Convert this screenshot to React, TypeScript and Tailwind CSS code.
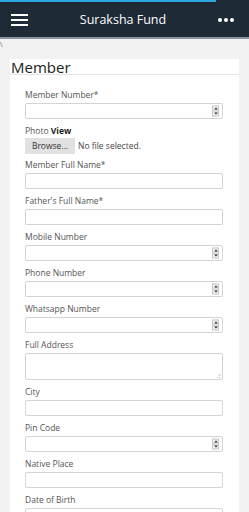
import React from 'react';

const Spinner = () => (
  <div className="absolute right-[3px] top-1/2 -translate-y-1/2 flex flex-col w-[7px] h-[11px] border border-[#c8c8c8] bg-[#f0f0f0]">
    <div className="flex-1 flex items-center justify-center border-b border-[#c8c8c8]">
      <div className="w-0 h-0 border-l-[2px] border-r-[2px] border-b-[2px] border-l-transparent border-r-transparent border-b-[#333]" />
    </div>
    <div className="flex-1 flex items-center justify-center">
      <div className="w-0 h-0 border-l-[2px] border-r-[2px] border-t-[2px] border-l-transparent border-r-transparent border-t-[#333]" />
    </div>
  </div>
);

const Field = ({ label, spin, tall, placeholder }: { label: React.ReactNode; spin?: boolean; tall?: boolean; placeholder?: string }) => (
  <div className="mb-[6px]">
    <div className="h-[12px] leading-[12px] text-[8.5px] text-[#555] mb-[2px]">{label}</div>
    <div className={`relative border border-[#d4d4d4] rounded-[2px] bg-white ${tall ? 'h-[27px]' : 'h-[16px]'}`}>
      {placeholder && <span className="absolute left-[5px] top-[2px] text-[8.5px] text-[#888]">{placeholder}</span>}
      {spin && <Spinner />}
      {tall && (
        <svg className="absolute right-[1px] bottom-[1px]" width="5" height="5" viewBox="0 0 5 5">
          <path d="M4 1 L4 1.5 M3 2.5 L3 3 M4 2.5 L4 3 M2 4 L2 4.5 M3 4 L3 4.5 M4 4 L4 4.5" stroke="#999" strokeWidth="1" />
        </svg>
      )}
    </div>
  </div>
);

export default function App() {
  return (
    <div className="w-[249px] h-[512px] overflow-hidden bg-[#f2f2f2] font-['Open_Sans',sans-serif]">
      {/* Header */}
      <div className="bg-[#1e2a36] border-b-2 border-[#8c949b]">
        <div className="h-[2px] w-[216px] bg-[#2ba6df]" />
        <div className="h-[35px] flex items-center pl-[11px] pr-[15px]">
          <div className="flex flex-col gap-[3px] w-[17px]">
            <div className="h-[2px] bg-white" />
            <div className="h-[2px] bg-white" />
            <div className="h-[2px] bg-white" />
          </div>
          <div className="flex-1 text-center text-white text-[12.5px] leading-none pt-[1px]">Suraksha Fund</div>
          <div className="flex gap-[2px] w-[16px] pt-[1px]">
            <div className="w-[4px] h-[4px] rounded-full bg-white" />
            <div className="w-[4px] h-[4px] rounded-full bg-white" />
            <div className="w-[4px] h-[4px] rounded-full bg-white" />
          </div>
        </div>
      </div>

      <div className="h-[20px] text-[7px] leading-[12px] text-[#666]">\</div>

      {/* Card */}
      <div className="mx-[10px] bg-white">
        <div className="h-[16px] leading-[16px] text-[15px] text-[#222] pl-[1px] border-b border-[#e6e6e6]">Member</div>
        <div className="pl-[15px] pr-[16px] pt-[14px]">
          <Field label="Member Number*" spin />
          <div className="mb-[5px]">
            <div className="h-[12px] leading-[12px] text-[8.5px] text-[#555] mb-[1px]">
              Photo <span className="font-bold text-[#222]">View</span>
            </div>
            <div className="flex items-center gap-[3px]">
              <div className="w-[50px] h-[16px] bg-[#e1e1e1] text-[8.5px] text-[#333] flex items-center justify-center">Browse...</div>
              <span className="text-[8.5px] text-[#444]">No file selected.</span>
            </div>
          </div>
          <Field label="Member Full Name*" />
          <Field label="Father's Full Name*" />
          <Field label="Mobile Number" spin />
          <Field label="Phone Number" spin />
          <Field label="Whatsapp Number" spin />
          <Field label="Full Address" tall />
          <Field label="City" />
          <Field label="Pin Code" spin />
          <Field label="Native Place" />
          <Field label="Date of Birth" placeholder="dd/mm/yyyy" />
        </div>
      </div>
    </div>
  );
}
